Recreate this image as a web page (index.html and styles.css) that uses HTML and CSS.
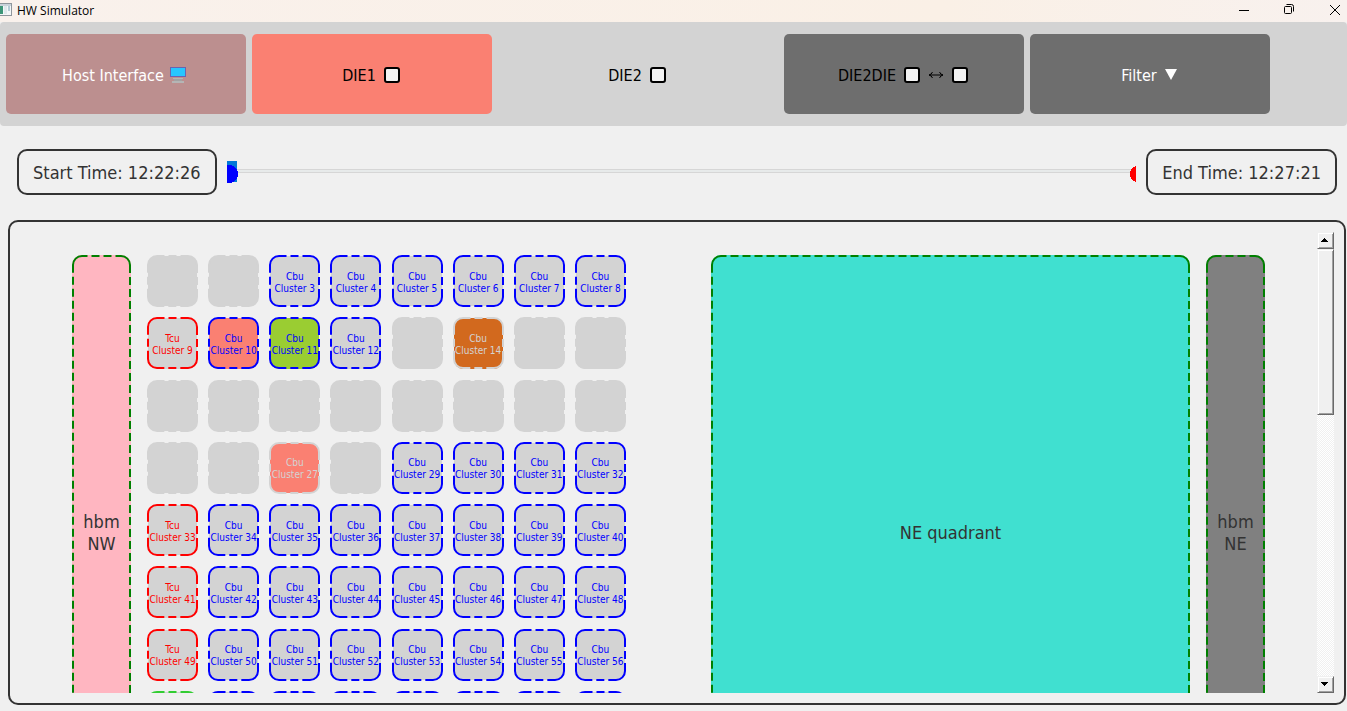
FILE: index.html
```html
<!DOCTYPE html>
<html lang="en">
<head>
<meta charset="utf-8">
<title>HW Simulator</title>
<link rel="stylesheet" href="styles.css">
</head>
<body>
<header class="titlebar">
  <svg class="app-icon" width="12" height="14" viewBox="0 0 12 14" aria-hidden="true">
    <rect x="-4" y="0.5" width="15.500" height="12" fill="#f4f7f8" stroke="#8f969c"/>
    <rect x="0" y="1" width="11" height="2" fill="#c9d3da"/>
    <rect x="-1" y="3" width="4" height="8" fill="#3d9678"/>
    <rect x="4" y="3" width="3" height="8" fill="#dfe9ec"/>
    <rect x="8" y="3" width="2" height="5" fill="#b5ccd6"/>
  </svg>
  <span class="app-name">HW Simulator</span>
  <div class="window-controls">
    <button aria-label="Minimize"><svg width="12" height="12" viewBox="0 0 12 12"><path d="M0 6.500H10" stroke="#000" fill="none"/></svg></button>
    <button aria-label="Restore"><svg width="12" height="12" viewBox="0 0 12 12"><rect x="0.5" y="2.500" width="7" height="7" rx="1" stroke="#000" fill="none"/><path d="M2.500 0.5H7.500Q9.500 0.5 9.500 2.500V7.500" stroke="#000" fill="none"/></svg></button>
    <button aria-label="Close"><svg width="12" height="12" viewBox="0 0 12 12"><path d="M1 1L11 11M11 1L1 11" stroke="#000" fill="none"/></svg></button>
  </div>
</header>

<nav class="toolbar">
  <button class="tool host">Host Interface
    <svg width="18" height="16" viewBox="1 1 18 16" aria-hidden="true"><rect x="1.500" y="1.500" width="15" height="9" fill="#26c6ff" stroke="#6a63b0"/><path d="M4 12H14V13H4ZM3 15H15V17H3Z" fill="#b5b5b5"/><path d="M5 13H13V15H5Z" fill="#a2a2a2"/></svg>
  </button>
  <div class="tool die1"><label for="die1">DIE1</label><input type="checkbox" id="die1"></div>
  <div class="tool die2"><label for="die2">DIE2</label><input type="checkbox" id="die2"></div>
  <div class="tool die2die"><label for="d2d-a">DIE2DIE</label><input type="checkbox" id="d2d-a"><label for="d2d-b" aria-label="DIE2DIE other direction"><svg width="16" height="10" viewBox="0 0 16 10"><path d="M1 5H15M4.500 2Q3.500 4.500 1 5Q3.500 5.500 4.500 8M11.500 2Q12.500 4.500 15 5Q12.500 5.500 11.500 8" fill="none" stroke="#000"/></svg></label><input type="checkbox" id="d2d-b"></div>
  <button class="tool filter">Filter <svg width="12" height="12" viewBox="0 0 12 12" aria-hidden="true"><path d="M0 0H12L6 11Z" fill="#fff"/></svg></button>
</nav>

<section class="timeline">
  <div class="time">Start Time: 12:22:26</div>
  <div class="range">
    <input type="range" class="start" min="0" max="295" value="0" aria-label="Start time">
    <input type="range" class="end" min="0" max="295" value="295" aria-label="End time">
  </div>
  <div class="time">End Time: 12:27:21</div>
</section>

<main class="panel">
  <div class="viewport">
    <div class="chip">
      <div class="half">
        <div class="hbm hbm-nw">hbm<br>NW</div>
        <div class="clusters" id="clusters"></div>
      </div>
      <div class="half">
        <div class="quadrant">NE quadrant</div>
        <div class="hbm hbm-ne">hbm<br>NE</div>
      </div>
    </div>
  </div>
  <div class="scrollbar">
    <button class="step" aria-label="Scroll up"><svg width="7" height="4" viewBox="0 0 7 4" shape-rendering="crispEdges"><path d="M3 0H4V1H5V2H6V3H7V4H0V3H1V2H2V1H3Z"/></svg></button>
    <div class="thumb"></div>
    <button class="step down" aria-label="Scroll down"><svg width="7" height="4" viewBox="0 0 7 4" shape-rendering="crispEdges"><path d="M0 0H7V1H6V2H5V3H4V4H3V3H2V2H1V1H0Z"/></svg></button>
  </div>
</main>
<script src="app.js"></script>
</body>
</html>
```

FILE: styles.css
```css
* { box-sizing: border-box; }

body {
  margin: 0;
  height: 100vh;
  display: flex;
  flex-direction: column;
  overflow: hidden;
  background: #f0f0f0;
  font-family: "DejaVu Sans Condensed", "Noto Sans", sans-serif;
  font-size: 18px;
  color: #333;
}

button { font: inherit; border: 0; padding: 0; background: none; }
svg { display: block; flex: none; }

.titlebar {
  height: 22px;
  flex: none;
  display: flex;
  align-items: center;
  gap: 5px;
  background: linear-gradient(90deg, #f9f1ec, #faf0e6 70%, #f8f1ee);
  color: #000;
  font-family: "Open Sans", "Noto Sans", sans-serif;
  font-size: 12px;
  line-height: 20px;
}
.app-icon { margin-bottom: 2px; }
.window-controls { margin: 0 6px 3px auto; display: flex; gap: 33px; }

.toolbar {
  flex: none;
  display: flex;
  gap: 6px;
  padding: 12px 6px;
  border-radius: 4px;
  background: #d3d3d3;
  font-size: 16px;
  color: #000;
}
.tool {
  display: flex;
  align-items: center;
  justify-content: center;
  gap: 8px;
  width: 240px;
  height: 80px;
  padding: 2px 2px 0 0;
  border-radius: 5px;
}
.host { gap: 6px; background: #bc8f8f; color: #fff; }
.die1 { background: #fa8072; }
.die2 { width: 280px; }
.die2die { background: #6e6e6e; }
.filter { background: #6e6e6e; color: #fff; }
.tool input {
  appearance: none;
  width: 16px;
  height: 16px;
  margin: 0;
  border: 2px solid #000;
  border-radius: 3px;
  background: #f3f3f3;
}
.tool input:checked { background: #0078d7; }

.timeline {
  flex: none;
  display: flex;
  align-items: center;
  gap: 10px;
  padding: 23px 10px 25px 17px;
}
.time {
  padding: 11px 14px 9px;
  border: 2px solid #333;
  border-radius: 10px;
  line-height: 22px;
  white-space: nowrap;
}
.range {
  flex: 1;
  position: relative;
  height: 24px;
}
.range input {
  appearance: none;
  position: absolute;
  inset: 0;
  width: 100%;
  height: 24px;
  margin: 0;
  background: none;
}
.range .start {
  background: linear-gradient(#d6d6d6 1px, #e7eaea 1px 3px, #d6d6d6 3px) 0 9px / 100% 4px no-repeat;
}
.range .end { pointer-events: none; }
.start::-webkit-slider-thumb {
  appearance: none;
  width: 11px;
  height: 24px;
  background:
    radial-gradient(circle at 2px 14px, #00f 9px, transparent 9px),
    linear-gradient(#0078d7, #0078d7) 0 1px / 10px 21px no-repeat;
}
.end::-webkit-slider-thumb {
  appearance: none;
  pointer-events: auto;
  width: 6px;
  height: 24px;
  background: radial-gradient(circle at 8px 14px, #f00 8px, transparent 8px);
}

.panel {
  flex: 1;
  min-height: 0;
  display: flex;
  margin: 0 1px 6px 8px;
  padding: 10px;
  border: 2px solid #333;
  border-radius: 10px;
}
.viewport {
  flex: 1;
  overflow: hidden;
  padding: 23px 52px 0 52px;
}
.chip { display: flex; gap: 85px; height: 556px; }
.half { flex: 1; display: flex; gap: 16px; }
.hbm, .quadrant {
  display: flex;
  align-items: center;
  justify-content: center;
  text-align: center;
  line-height: 22px;
  border-radius: 10px;
  position: relative;
}
.hbm { width: 59px; }
.hbm-nw { background: #ffb6c1; }
.hbm-ne { background: #808080; }
.quadrant { flex: 1; background: #40e0d0; }

.outline {
  position: absolute;
  inset: 0;
  width: 100%;
  height: 100%;
  overflow: visible;
  fill: none;
  stroke: currentColor;
  stroke-width: 2px;
}
.hbm .outline, .quadrant .outline { color: #008000; }

.clusters {
  flex: 1;
  height: 488px;
  display: grid;
  grid-template-columns: repeat(8, 1fr);
  grid-template-rows: repeat(8, 1fr);
  gap: 10px;
}
.cluster {
  position: relative;
  display: flex;
  align-items: center;
  justify-content: center;
  text-align: center;
  border-radius: 10px;
  background: #d3d3d3;
  background-clip: content-box;
  padding: 1px;
  color: #d3d3d3;
  font-size: 10px;
  line-height: 12px;
  white-space: nowrap;
}
.cluster span { padding-top: 3px; }
.cbu { color: #00f; }
.tcu { color: #f00; }
.lime { color: #32cd32; }
.salmon { background-color: #fa8072; }
.green { background-color: #9acd32; }
.orange { background-color: #d2691e; }
.off { color: #d3d3d3; }

.scrollbar {
  width: 17px;
  display: flex;
  flex-direction: column;
  background: repeating-conic-gradient(#fff 0 25%, #f0f0f0 0 50%) 0 0 / 2px 2px;
}
.step, .thumb {
  background: #f0f0f0;
  border: 1px solid;
  border-color: #f0f0f0 #696969 #696969 #f0f0f0;
  box-shadow: inset 1px 1px #fff, inset -1px -1px #a0a0a0;
}
.step {
  height: 17px;
  display: flex;
  align-items: center;
  justify-content: center;
  padding: 0 2px 1px 0;
}
.thumb { height: 166px; }
.down { margin-top: auto; }
```

FILE: app.js
```js
const SVG = "http://www.w3.org/2000/svg";

// Rounded outline whose corners are solid and whose sides are dashed 8 on, 4 off.
function addOutline(el) {
  const w = el.clientWidth, h = el.clientHeight, r = 9;
  const arc = Math.PI * r / 2;
  const dashes = [];
  let run = 0;
  for (const side of [w - 20, h - 20, w - 20, h - 20]) {
    const count = Math.max(1, Math.round((side - 20) / 12));
    const lead = (side - count * 12 - 4) / 2;
    run += lead;
    dashes.push(run);
    for (let i = 0; i < count; i++) dashes.push(4, 8);
    dashes.push(4);
    run = lead + arc;
  }
  dashes.push(run, 0);
  const svg = document.createElementNS(SVG, "svg");
  svg.setAttribute("class", "outline");
  const rect = document.createElementNS(SVG, "rect");
  const attrs = { x: 1, y: 1, width: w - 2, height: h - 2, rx: r, "stroke-dasharray": dashes.join(" ") };
  for (const name in attrs) rect.setAttribute(name, attrs[name]);
  svg.append(rect);
  el.append(svg);
}

const empty = new Set([1, 2, 13, 15, 16, 17, 18, 19, 20, 21, 22, 23, 24, 25, 26, 28]);
const tcu = new Set([9, 33, 41, 49]);
const special = { 10: "salmon", 11: "green", 14: "orange off", 27: "salmon off", 57: "lime" };
const labelled = 56;
const grid = document.getElementById("clusters");

for (let n = 1; n <= 64; n++) {
  const cell = document.createElement("div");
  cell.className = "cluster";
  if (!empty.has(n)) {
    const kind = tcu.has(n) ? "Tcu" : "Cbu";
    cell.className += " " + kind.toLowerCase() + " " + (special[n] || "");
    if (n <= labelled) {
      const label = document.createElement("span");
      label.append(kind, document.createElement("br"), "Cluster " + n);
      cell.append(label);
    }
  }
  grid.append(cell);
}

document.querySelectorAll(".cluster, .hbm, .quadrant").forEach(addOutline);
```
